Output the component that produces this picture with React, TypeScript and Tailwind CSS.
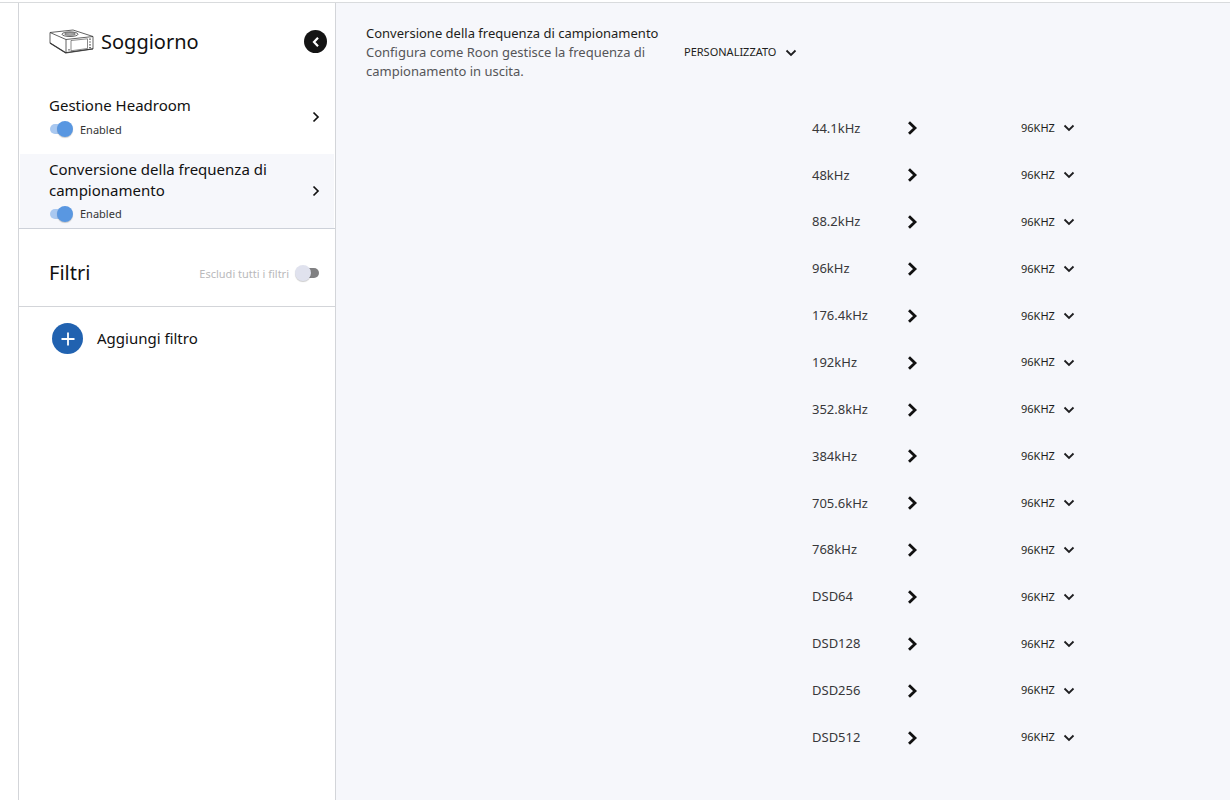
import { useState } from "react";

const RATES = [
  "44.1kHz",
  "48kHz",
  "88.2kHz",
  "96kHz",
  "176.4kHz",
  "192kHz",
  "352.8kHz",
  "384kHz",
  "705.6kHz",
  "768kHz",
  "DSD64",
  "DSD128",
  "DSD256",
  "DSD512",
];

interface IconProps {
  className?: string;
}

function ChevronRight({ className }: IconProps) {
  return (
    <svg viewBox="0 0 8 12" className={className} fill="none" stroke="currentColor" strokeWidth="1.7" aria-hidden="true">
      <path d="M1.5 1.5 6 6 1.5 10.5" />
    </svg>
  );
}

function ChevronBold({ className }: IconProps) {
  return (
    <svg viewBox="0 0 11 14" className={className} fill="none" stroke="currentColor" strokeWidth="2.8" aria-hidden="true">
      <path d="M2 1.2 8 7 2 12.8" />
    </svg>
  );
}

function ChevronDown({ className }: IconProps) {
  return (
    <svg viewBox="0 0 12 8" className={className} fill="none" stroke="currentColor" strokeWidth="1.8" aria-hidden="true">
      <path d="M1.5 1.5 6 6 10.5 1.5" />
    </svg>
  );
}

function DeviceIcon({ className }: IconProps) {
  return (
    <svg viewBox="0 0 46 26" className={className} fill="none" stroke="#3a3a3a" strokeWidth="0.8" strokeLinejoin="round" aria-hidden="true">
      <path d="M1 3.5 24 1 44 7.5 17 10.5Z" />
      <path d="M1 3.5V14L17 24V10.5" />
      <path d="M17 24 44 20V7.5" />
      <path d="M1 14 17 24" strokeWidth="1.3" />
      <path d="M22 11.5 38.5 9.8V19.5L22 21.8Z" strokeWidth="0.6" />
      <path d="M17 23.6 44 19.8" strokeWidth="1" />
      <ellipse cx="21" cy="5.2" rx="8" ry="2.3" />
      <ellipse cx="21" cy="5" rx="5.4" ry="1.3" fill="#bbb" strokeWidth="0.6" />
      <path d="M41 9.6V19.5" strokeWidth="1.4" strokeDasharray="1.2 1.6" />
      <path d="M20 20v1.6" strokeWidth="1" />
    </svg>
  );
}

interface SwitchProps {
  id: string;
  checked: boolean;
  onChange: (checked: boolean) => void;
}

function Switch({ id, checked, onChange }: SwitchProps) {
  return (
    <input
      id={id}
      type="checkbox"
      role="switch"
      checked={checked}
      onChange={(e) => onChange(e.target.checked)}
      className="relative h-4 w-6 shrink-0 cursor-pointer appearance-none before:absolute before:top-[3px] before:left-[5px] before:h-2.5 before:w-[19px] before:rounded-full before:bg-[#808082] after:absolute after:top-0 after:left-0 after:size-4 after:rounded-full after:bg-[#e0e2ee] after:shadow-[0_1px_1px_rgba(0,0,0,0.2)] checked:before:left-px checked:before:bg-[#a9c8f0] checked:after:left-2 checked:after:bg-[#5997e1]"
    />
  );
}

interface DspItemProps {
  id: string;
  title: string;
  active?: boolean;
}

function DspItem({ id, title, active = false }: DspItemProps) {
  const [enabled, setEnabled] = useState(true);

  return (
    <li
      className={`mx-px flex min-h-[74px] items-center justify-between pr-2.5 pl-[29px] ${active ? "bg-[#f6f7fb]" : ""}`}
    >
      <div className="pt-[3px]">
        <h2 className="max-w-[240px] text-[15px] leading-[21px]">{title}</h2>
        <div className="flex h-[26px] items-center gap-[7px]">
          <Switch id={id} checked={enabled} onChange={setEnabled} />
          <label htmlFor={id} className="pt-0.5 text-[11px] text-[#333]">
            Enabled
          </label>
        </div>
      </div>
      <button type="button" aria-label={title} className="flex size-4 items-center justify-center">
        <ChevronRight className="h-3 w-2" />
      </button>
    </li>
  );
}

interface RateSelectProps {
  id: string;
  label?: string;
  options: string[];
}

function RateSelect({ id, label, options }: RateSelectProps) {
  return (
    <div className="relative flex items-center text-[#1e1e20]">
      <select id={id} aria-label={label} className="cursor-pointer appearance-none bg-transparent pr-5 text-[11px]">
        {options.map((option) => (
          <option key={option}>{option}</option>
        ))}
      </select>
      <ChevronDown className="pointer-events-none absolute right-0 h-2 w-3" />
    </div>
  );
}

export default function App() {
  const [bypass, setBypass] = useState(false);

  return (
    <div className="flex min-h-screen flex-col bg-white pt-0.5 font-['Noto_Sans',sans-serif] text-[#111]">
      <div className="flex flex-1 border-t border-[#d9dbdd] pl-[18px]">
        <aside className="w-[318px] shrink-0 border-x border-[#d3d5d9]">
          <header className="flex h-[77px] items-center justify-between pr-2 pl-[30px]">
            <div className="flex items-center gap-1.5">
              <DeviceIcon className="h-[26px] w-[46px]" />
              <h1 className="text-xl">Soggiorno</h1>
            </div>
            <button
              type="button"
              aria-label="Indietro"
              className="flex size-[23px] items-center justify-center rounded-full bg-[#141414] text-white"
            >
              <svg viewBox="0 0 8 12" className="h-3 w-2" fill="none" stroke="currentColor" strokeWidth="2.2" aria-hidden="true">
                <path d="M6 1.8 2 6 6 10.2" />
              </svg>
            </button>
          </header>

          <ul className="border-b border-[#cdd1d9]">
            <DspItem id="headroom" title="Gestione Headroom" />
            <DspItem id="sample-rate" title="Conversione della frequenza di campionamento" active />
          </ul>

          <section className="flex h-[78px] items-center justify-between border-b border-[#d3d5d9] pt-[11px] pr-4 pl-[30px]">
            <h2 className="text-xl">Filtri</h2>
            <div className="flex items-center gap-1.5">
              <label htmlFor="bypass" className="pt-0.5 text-[11px] text-[#b9b9bb]">
                Escludi tutti i filtri
              </label>
              <Switch id="bypass" checked={bypass} onChange={setBypass} />
            </div>
          </section>

          <button type="button" className="mt-4 flex items-center gap-3.5 pl-[33px] text-[15px]">
            <span className="flex size-[31px] items-center justify-center rounded-full bg-[#2162b0] text-white">
              <svg viewBox="0 0 14 14" className="size-3.5" stroke="currentColor" strokeWidth="1.8" aria-hidden="true">
                <path d="M7 .5v13M.5 7h13" />
              </svg>
            </span>
            Aggiungi filtro
          </button>
        </aside>

        <main className="flex min-w-0 flex-1 flex-col bg-[#f6f7fb] pt-[21px] pb-[39px]">
          <div className="flex items-center pl-[30px]">
            <div className="w-[318px] pr-4 text-[13px] leading-[19px]">
              <h2 className="whitespace-nowrap text-[#1e1e20]">Conversione della frequenza di campionamento</h2>
              <p className="text-[#555558]">Configura come Roon gestisce la frequenza di campionamento in uscita.</p>
            </div>
            <RateSelect id="mode" label="Conversione della frequenza di campionamento" options={["PERSONALIZZATO"]} />
          </div>

          <ul className="mt-6 flex flex-1 flex-col pr-[155px]">
            {RATES.map((rate) => (
              <li key={rate} className="flex flex-1 items-center justify-end">
                <label htmlFor={rate} className="w-[95px] text-[13px] text-[#38383a]">
                  {rate}
                </label>
                <ChevronBold className="mr-[103px] h-3.5 w-[11px]" />
                <RateSelect id={rate} options={["96KHZ"]} />
              </li>
            ))}
          </ul>
        </main>
      </div>
    </div>
  );
}
